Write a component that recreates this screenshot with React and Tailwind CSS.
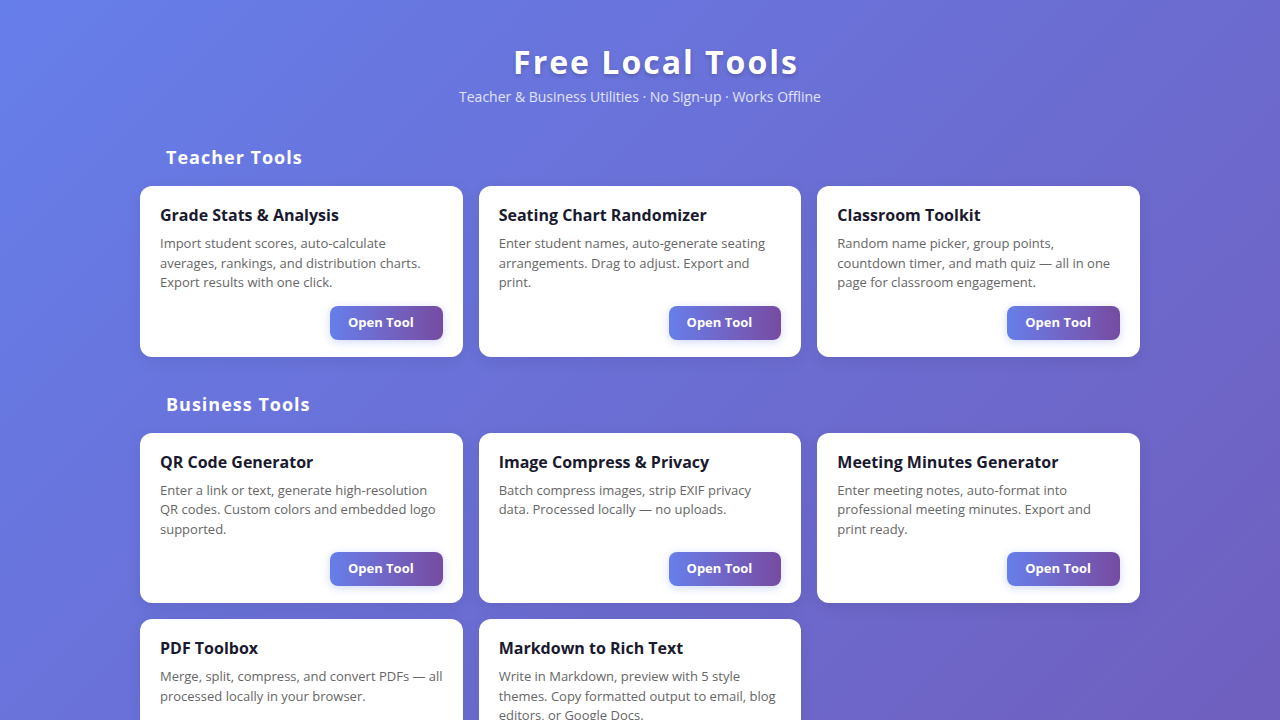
const teacherTools = [
  {
    title: "Grade Stats & Analysis",
    desc: "Import student scores, auto-calculate averages, rankings, and distribution charts. Export results with one click.",
  },
  {
    title: "Seating Chart Randomizer",
    desc: "Enter student names, auto-generate seating arrangements. Drag to adjust. Export and print.",
  },
  {
    title: "Classroom Toolkit",
    desc: "Random name picker, group points, countdown timer, and math quiz — all in one page for classroom engagement.",
  },
];

const businessTools = [
  {
    title: "QR Code Generator",
    desc: "Enter a link or text, generate high-resolution QR codes. Custom colors and embedded logo supported.",
  },
  {
    title: "Image Compress & Privacy",
    desc: "Batch compress images, strip EXIF privacy data. Processed locally — no uploads.",
  },
  {
    title: "Meeting Minutes Generator",
    desc: "Enter meeting notes, auto-format into professional meeting minutes. Export and print ready.",
  },
  {
    title: "PDF Toolbox",
    desc: "Merge, split, compress, and convert PDFs — all processed locally in your browser.",
  },
  {
    title: "Markdown to Rich Text",
    desc: "Write in Markdown, preview with 5 style themes. Copy formatted output to email, blog editors, or Google Docs.",
  },
];

function ToolCard({ title, desc }) {
  return (
    <div className="flex flex-col bg-white rounded-xl px-5 pt-5 pb-[17px] shadow-[0_4px_16px_rgba(0,0,0,0.08)]">
      <h3 className="text-[16px] leading-[19px] font-bold text-[#1a1a2e] mb-[9px]">{title}</h3>
      <p className="text-[13px] leading-[19.5px] text-[#666]">{desc}</p>
      <div className="mt-auto pt-[13px] flex justify-end">
        <button className="h-[34px] pl-[18px] pr-[29px] rounded-lg bg-gradient-to-r from-[#667eea] to-[#764ba2] text-white text-[13px] font-bold text-left shadow-[0_2px_8px_rgba(102,126,234,0.3)]">
          Open Tool
        </button>
      </div>
    </div>
  );
}

function Section({ title, tools }) {
  return (
    <section className="mb-[34px]">
      <h2 className="pl-[26px] text-[18px] leading-[26px] font-bold text-white tracking-[1px] mb-4">
        {title}
      </h2>
      <div className="grid grid-cols-3 gap-4">
        {tools.map((t) => (
          <ToolCard key={t.title} {...t} />
        ))}
      </div>
    </section>
  );
}

export default function App() {
  return (
    <div
      className="min-h-screen bg-[linear-gradient(135deg,#667eea_0%,#764ba2_100%)] bg-[length:100%_2050px] bg-no-repeat bg-[#764ba2]"
      style={{ fontFamily: '"Open Sans", "Noto Sans", sans-serif' }}
    >
      <div className="max-w-[1000px] mx-auto pt-10 pb-10">
        <header className="text-center mb-[37px]">
          <h1 className="pl-8 text-[32px] leading-[44px] font-bold text-white tracking-[2px] [text-shadow:0_2px_4px_rgba(0,0,0,0.2)]">
            Free Local Tools
          </h1>
          <p className="mt-[3px] text-[14px] leading-[20px] text-white/80">
            Teacher &amp; Business Utilities · No Sign-up · Works Offline
          </p>
        </header>
        <Section title="Teacher Tools" tools={teacherTools} />
        <Section title="Business Tools" tools={businessTools} />
      </div>
    </div>
  );
}
